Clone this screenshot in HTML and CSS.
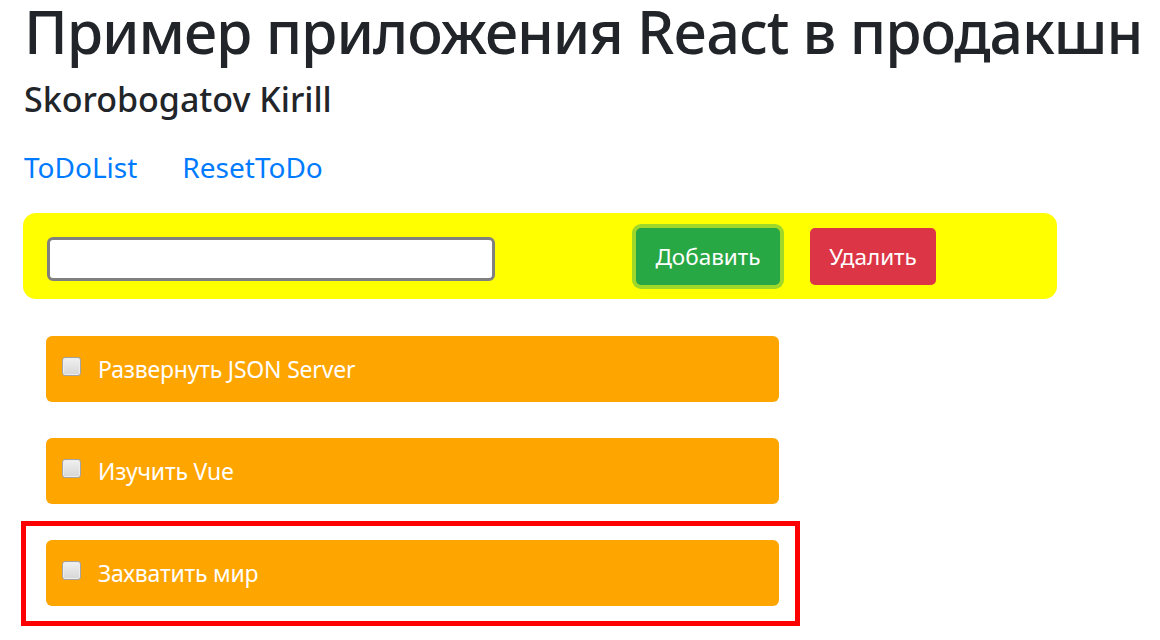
FILE: index.html
```html
<!DOCTYPE html>
<html lang="ru">
<head>
<meta charset="utf-8">
<title>ToDo</title>
<link rel="stylesheet" href="styles.css">
</head>
<body>
<div class="app">
  <h1 class="title">Пример приложения React в продакшн</h1>
  <h4 class="author">Skorobogatov Kirill</h4>
  <nav class="nav">
    <a class="nav-link" href="#">ToDoList</a>
    <a class="nav-link" href="#">ResetToDo</a>
  </nav>
  <form class="bar">
    <input class="field" type="text">
    <button class="btn btn-add" type="button">Добавить</button>
    <button class="btn btn-del" type="button">Удалить</button>
  </form>
  <ul class="list">
    <li class="item"><div class="card"><span class="check"></span><span class="label">Развернуть JSON Server</span></div></li>
    <li class="item"><div class="card"><span class="check"></span><span class="label">Изучить Vue</span></div></li>
    <li class="item item-active"><div class="card"><span class="check"></span><span class="label">Захватить мир</span></div></li>
  </ul>
</div>
</body>
</html>
```

FILE: styles.css
```css
* { box-sizing: border-box; }
html, body { margin: 0; padding: 0; background: #fff; }
body {
  font-family: "Noto Sans", "Open Sans", sans-serif;
  color: #212529;
  overflow: hidden;
}
.app { padding: 0 0 0 24px; }
.title {
  margin: 0;
  font-size: 59px;
  font-weight: 500;
  line-height: 62px;
  white-space: nowrap;
  letter-spacing: -1.05px;
}
.author {
  margin: 17px 0 0 0;
  font-size: 34px;
  font-weight: 500;
  line-height: 40px;
}
.nav {
  display: flex;
  gap: 45px;
  margin-top: 28px;
}
.nav-link {
  color: #007bff;
  text-decoration: none;
  font-size: 28px;
  line-height: 40px;
}
.bar {
  display: flex;
  align-items: center;
  width: 1034px;
  height: 86px;
  margin: 26px 0 0 -1px;
  padding: 0 0 0 24px;
  background: #ffff00;
  border-radius: 13px;
}
.field {
  width: 448px;
  height: 44px;
  margin-top: 5px;
  border: 3px solid #808080;
  border-radius: 6px;
  background: #fff;
}
.btn {
  height: 57px;
  border: none;
  border-radius: 5px;
  color: #fff;
  font-family: inherit;
  font-size: 22.5px;
  padding: 0;
}
.btn-add {
  width: 144px;
  margin-left: 141px;
  background: #28a745;
  box-shadow: 0 0 0 4px #9fd82a;
}
.btn-del {
  width: 126px;
  margin-left: 30px;
  background: #dc3545;
}
.list {
  list-style: none;
  margin: 23px 0 0 2px;
  padding: 0;
}
.item {
  width: 769px;
  padding: 14px 16px 15px 20px;
  margin-bottom: 7px;
}
.item-active { outline: 5px solid #ff0000; }
.card {
  display: flex;
  align-items: center;
  height: 66px;
  padding: 0 0 0 16px;
  background: #ffa500;
  border-radius: 6px;
  color: #fff;
  font-size: 23px;
  letter-spacing: -0.2px;
}
.check {
  width: 19px;
  height: 19px;
  margin: -6px 17px 0 0;
  border: 1px solid #a3a3a3;
  border-radius: 3px;
  background: linear-gradient(#f0f0f0, #d6d6d6);
  box-shadow: inset 0 0 0 1px #ececec;
  flex: none;
}
.label { line-height: 32px; }
```
